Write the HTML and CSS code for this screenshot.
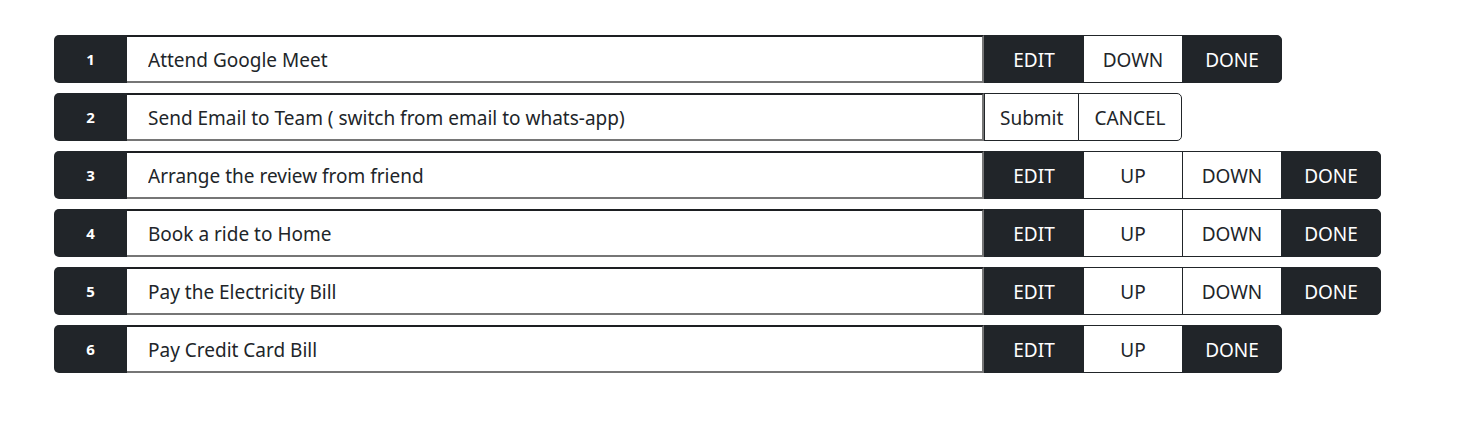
FILE: index.html
```html
<!DOCTYPE html>
<html lang="en">
<head>
<meta charset="utf-8">
<title>Todo</title>
<link rel="stylesheet" href="styles.css">
</head>
<body>
<div class="list">
  <div class="row">
    <span class="num">1</span>
    <input class="task" type="text" value="Attend Google Meet">
    <button class="btn dark">EDIT</button>
    <button class="btn light">DOWN</button>
    <button class="btn dark last">DONE</button>
  </div>
  <div class="row">
    <span class="num">2</span>
    <input class="task" type="text" value="Send Email to Team ( switch from email to whats-app)">
    <button class="btn light auto">Submit</button>
    <button class="btn light auto last">CANCEL</button>
  </div>
  <div class="row">
    <span class="num">3</span>
    <input class="task" type="text" value="Arrange the review from friend">
    <button class="btn dark">EDIT</button>
    <button class="btn light">UP</button>
    <button class="btn light">DOWN</button>
    <button class="btn dark last">DONE</button>
  </div>
  <div class="row">
    <span class="num">4</span>
    <input class="task" type="text" value="Book a ride to Home">
    <button class="btn dark">EDIT</button>
    <button class="btn light">UP</button>
    <button class="btn light">DOWN</button>
    <button class="btn dark last">DONE</button>
  </div>
  <div class="row">
    <span class="num">5</span>
    <input class="task" type="text" value="Pay the Electricity Bill">
    <button class="btn dark">EDIT</button>
    <button class="btn light">UP</button>
    <button class="btn light">DOWN</button>
    <button class="btn dark last">DONE</button>
  </div>
  <div class="row">
    <span class="num">6</span>
    <input class="task" type="text" value="Pay Credit Card Bill">
    <button class="btn dark">EDIT</button>
    <button class="btn light">UP</button>
    <button class="btn dark last">DONE</button>
  </div>
</div>
</body>
</html>
```

FILE: styles.css
```css
* { box-sizing: border-box; }
body {
  margin: 0;
  background: #fff;
  font-family: "Noto Sans", "Open Sans", sans-serif;
  color: #212529;
}
.list {
  padding: 35px 0 0 54px;
  display: flex;
  flex-direction: column;
  gap: 10px;
}
.row {
  display: flex;
  height: 48px;
}
.num {
  width: 73px;
  flex: none;
  background: #212529;
  color: #fff;
  font-weight: 700;
  font-size: 15px;
  display: flex;
  align-items: center;
  justify-content: center;
  border-radius: 5px 0 0 5px;
}
.task {
  width: 857px;
  flex: none;
  height: 48px;
  margin: 0;
  padding: 1px 0 0 21px;
  font-family: inherit;
  font-size: 19px;
  color: #212529;
  background: #fff;
  border-style: solid;
  border-width: 2px 2px 2px 0;
  border-color: #1d1f22 #767676 #767676 #1d1f22;
  outline: none;
}
.btn {
  width: 100px;
  flex: none;
  height: 48px;
  margin: 0 0 0 -1px;
  padding: 1px 15px 0;
  font-family: inherit;
  font-size: 19px;
  border: 1px solid #212529;
  border-radius: 0;
}
.task + .btn { margin-left: 0; }
.dark { background: #212529; color: #fff; }
.light { background: #fff; color: #212529; }
.auto { width: auto; }
.last { border-radius: 0 5px 5px 0; }
```
